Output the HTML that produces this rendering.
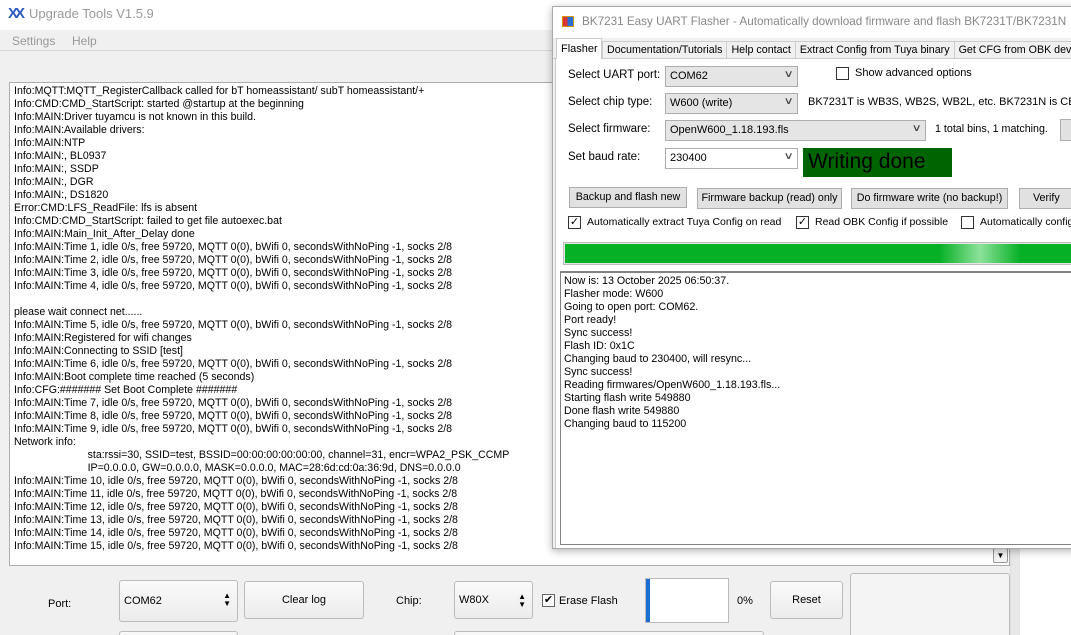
<!DOCTYPE html><html><head><style>
*{box-sizing:border-box;margin:0;padding:0}
html,body{width:1071px;height:635px;overflow:hidden}
body{position:relative;background:#fff;font-family:"Liberation Sans",sans-serif;font-size:11px;color:#000}
#w{position:absolute;left:0;top:0;width:1071px;height:635px;overflow:hidden}
.a{position:absolute}
.log div{height:13px;line-height:13px;white-space:pre}
.btn{position:absolute;background:#e1e1e1;border:1px solid #adadad;text-align:center;font-size:10.7px;white-space:nowrap}
.cb{position:absolute;width:13px;height:13px;border:1px solid #333;background:#fff;font-size:11px;line-height:11px;text-align:center}
.sel{position:absolute;background:#e5e5e5;border:1px solid #adadad;font-size:11px;padding:3px 4px}
.sel:after{content:"\2228";position:absolute;right:5px;top:2px;font-size:10px;color:#444;transform:scaleX(1.4)}
.lb{position:absolute;font-size:11.5px;white-space:nowrap}
.rb{position:absolute;border:1px solid #bbb;border-radius:3px;background:linear-gradient(#fafafa,#ececec);font-size:11px;text-align:center}
</style></head><body><div id="w">
<!-- left app -->
<div class="a" style="left:0;top:0;width:1020px;height:30px;background:#fff"></div>
<div class="a" style="left:8px;top:5px;color:#2a5bbf;font-size:15px;font-weight:bold;letter-spacing:-3px">XX</div>
<div class="a" style="left:29px;top:6px;font-size:13px;color:#999">Upgrade Tools V1.5.9</div>
<div class="a" style="left:0;top:30px;width:1020px;height:605px;background:#f0f0f0"></div>
<div class="a" style="left:0;top:50px;width:1020px;height:1px;background:#d8d8d8"></div>
<div class="a" style="left:12px;top:34px;font-size:12px;color:#999">Settings</div>
<div class="a" style="left:72px;top:34px;font-size:12px;color:#999">Help</div>
<div class="a" style="left:1010px;top:30px;width:10px;height:605px;background:#e8e8e8;border-left:1px solid #ddd"></div>
<div class="a log" style="left:9px;top:82px;width:1001px;height:484px;background:#fff;border:1px solid #adadad;padding:2px 0 0 4px;font-size:10.6px;overflow:hidden">
<div>Info:MQTT:MQTT_RegisterCallback called for bT homeassistant/ subT homeassistant/+</div>
<div>Info:CMD:CMD_StartScript: started @startup at the beginning</div>
<div>Info:MAIN:Driver tuyamcu is not known in this build.</div>
<div>Info:MAIN:Available drivers:</div>
<div>Info:MAIN:NTP</div>
<div>Info:MAIN:, BL0937</div>
<div>Info:MAIN:, SSDP</div>
<div>Info:MAIN:, DGR</div>
<div>Info:MAIN:, DS1820</div>
<div>Error:CMD:LFS_ReadFile: lfs is absent</div>
<div>Info:CMD:CMD_StartScript: failed to get file autoexec.bat</div>
<div>Info:MAIN:Main_Init_After_Delay done</div>
<div>Info:MAIN:Time 1, idle 0/s, free 59720, MQTT 0(0), bWifi 0, secondsWithNoPing -1, socks 2/8</div>
<div>Info:MAIN:Time 2, idle 0/s, free 59720, MQTT 0(0), bWifi 0, secondsWithNoPing -1, socks 2/8</div>
<div>Info:MAIN:Time 3, idle 0/s, free 59720, MQTT 0(0), bWifi 0, secondsWithNoPing -1, socks 2/8</div>
<div>Info:MAIN:Time 4, idle 0/s, free 59720, MQTT 0(0), bWifi 0, secondsWithNoPing -1, socks 2/8</div>
<div> </div>
<div>please wait connect net......</div>
<div>Info:MAIN:Time 5, idle 0/s, free 59720, MQTT 0(0), bWifi 0, secondsWithNoPing -1, socks 2/8</div>
<div>Info:MAIN:Registered for wifi changes</div>
<div>Info:MAIN:Connecting to SSID [test]</div>
<div>Info:MAIN:Time 6, idle 0/s, free 59720, MQTT 0(0), bWifi 0, secondsWithNoPing -1, socks 2/8</div>
<div>Info:MAIN:Boot complete time reached (5 seconds)</div>
<div>Info:CFG:####### Set Boot Complete #######</div>
<div>Info:MAIN:Time 7, idle 0/s, free 59720, MQTT 0(0), bWifi 0, secondsWithNoPing -1, socks 2/8</div>
<div>Info:MAIN:Time 8, idle 0/s, free 59720, MQTT 0(0), bWifi 0, secondsWithNoPing -1, socks 2/8</div>
<div>Info:MAIN:Time 9, idle 0/s, free 59720, MQTT 0(0), bWifi 0, secondsWithNoPing -1, socks 2/8</div>
<div>Network info:</div>
<div>                         sta:rssi=30, SSID=test, BSSID=00:00:00:00:00:00, channel=31, encr=WPA2_PSK_CCMP</div>
<div>                         IP=0.0.0.0, GW=0.0.0.0, MASK=0.0.0.0, MAC=28:6d:cd:0a:36:9d, DNS=0.0.0.0</div>
<div>Info:MAIN:Time 10, idle 0/s, free 59720, MQTT 0(0), bWifi 0, secondsWithNoPing -1, socks 2/8</div>
<div>Info:MAIN:Time 11, idle 0/s, free 59720, MQTT 0(0), bWifi 0, secondsWithNoPing -1, socks 2/8</div>
<div>Info:MAIN:Time 12, idle 0/s, free 59720, MQTT 0(0), bWifi 0, secondsWithNoPing -1, socks 2/8</div>
<div>Info:MAIN:Time 13, idle 0/s, free 59720, MQTT 0(0), bWifi 0, secondsWithNoPing -1, socks 2/8</div>
<div>Info:MAIN:Time 14, idle 0/s, free 59720, MQTT 0(0), bWifi 0, secondsWithNoPing -1, socks 2/8</div>
<div>Info:MAIN:Time 15, idle 0/s, free 59720, MQTT 0(0), bWifi 0, secondsWithNoPing -1, socks 2/8</div>
</div>
<div class="a" style="left:993px;top:548px;width:15px;height:15px;border:1px solid #999;border-radius:2px;background:#f4f4f4;font-size:8px;text-align:center;line-height:13px">&#9660;</div>
<div class="a" style="left:1021px;top:548px;width:50px;height:64px;background:#fff"></div>
<!-- bottom controls -->
<div class="lb" style="left:48px;top:598px;font-size:11px">Port:</div>
<div class="rb" style="left:119px;top:580px;width:119px;height:42px;text-align:left;padding:14px 4px">COM62<span style="position:absolute;right:6px;top:11px;font-size:8px;line-height:8px">&#9650;<br>&#9660;</span></div>
<div class="rb" style="left:244px;top:581px;width:120px;height:38px;line-height:36px">Clear log</div>
<div class="lb" style="left:396px;top:595px;font-size:11px">Chip:</div>
<div class="rb" style="left:454px;top:581px;width:79px;height:38px;text-align:left;padding:12px 4px">W80X<span style="position:absolute;right:6px;top:11px;font-size:8px;line-height:8px">&#9650;<br>&#9660;</span></div>
<div class="cb" style="left:542px;top:594px;border-color:#666">&#10004;</div>
<div class="lb" style="left:559px;top:595px;font-size:11px">Erase Flash</div>
<div class="a" style="left:645px;top:578px;width:84px;height:45px;background:#fff;border:1px solid #bbb"><div style="width:4px;height:100%;background:#1a6fd1"></div></div>
<div class="lb" style="left:737px;top:595px;font-size:11px">0%</div>
<div class="rb" style="left:770px;top:581px;width:73px;height:38px;line-height:36px">Reset</div>
<div class="rb" style="left:850px;top:573px;width:160px;height:70px;background:#f4f4f4"></div>
<div class="rb" style="left:119px;top:631px;width:119px;height:10px"></div>
<div class="rb" style="left:454px;top:631px;width:310px;height:10px"></div>
<!-- flasher window -->
<div class="a" style="left:552px;top:6px;width:530px;height:543px;background:#f0f0f0;border:1px solid #aaa;box-shadow:0 2px 8px rgba(0,0,0,.3)"></div>
<div class="a" style="left:553px;top:7px;width:518px;height:31px;background:#fff"></div>
<div class="a" style="left:562px;top:16px;width:12px;height:11px;background:linear-gradient(90deg,#d33 0 45%,#2a6fd6 45%);border:1px solid #c90"></div>
<div class="a" style="left:582px;top:15px;font-size:11.7px;color:#888;white-space:nowrap">BK7231 Easy UART Flasher - Automatically download firmware and flash BK7231T/BK7231N &nbsp;-</div>
<!-- tabs -->
<div class="a" style="left:553px;top:58px;width:518px;height:1px;background:#ccc"></div>
<div class="a" style="left:556px;top:38px;width:46px;height:21px;background:#fff;border:1px solid #ccc;border-bottom:none;padding:4px 4px;font-size:11px">Flasher</div>
<div class="a" style="left:602px;top:41px;width:469px;height:18px;display:flex;font-size:10.7px;white-space:nowrap;overflow:hidden">
<div style="border:1px solid #ccc;padding:2px 4px;background:#f0f0f0">Documentation/Tutorials</div>
<div style="border:1px solid #ccc;border-left:none;padding:2px 4px">Help contact</div>
<div style="border:1px solid #ccc;border-left:none;padding:2px 4px">Extract Config from Tuya binary</div>
<div style="border:1px solid #ccc;border-left:none;padding:2px 4px">Get CFG from OBK device</div>
</div>
<div class="a" style="left:555px;top:59px;width:516px;height:489px;background:#fff;border-left:1px solid #ccc"></div>
<div class="lb" style="left:568px;top:69px">Select UART port:</div>
<div class="sel" style="left:665px;top:66px;width:133px;height:21px">COM62</div>
<div class="cb" style="left:836px;top:67px;border-color:#333"></div>
<div class="lb" style="left:855px;top:67px;font-size:11px">Show advanced options</div>
<div class="lb" style="left:568px;top:96px">Select chip type:</div>
<div class="sel" style="left:665px;top:93px;width:133px;height:21px">W600 (write)</div>
<div class="lb" style="left:808px;top:96px;font-size:11px">BK7231T is WB3S, WB2S, WB2L, etc. BK7231N is CB2S</div>
<div class="lb" style="left:568px;top:123px">Select firmware:</div>
<div class="sel" style="left:665px;top:120px;width:261px;height:21px">OpenW600_1.18.193.fls</div>
<div class="lb" style="left:935px;top:123px;font-size:10.7px">1 total bins, 1 matching.</div>
<div class="btn" style="left:1060px;top:119px;width:11px;height:22px;border-right:none"></div>
<div class="lb" style="left:568px;top:151px">Set baud rate:</div>
<div class="sel" style="left:665px;top:148px;width:133px;height:21px;background:#fff">230400</div>
<div class="a" style="left:803px;top:148px;width:149px;height:29px;background:#006400;color:#000;font-size:21px;padding:2px 5px;white-space:nowrap">Writing done</div>
<div class="btn" style="left:569px;top:187px;width:118px;height:21px;line-height:19px">Backup and flash new</div>
<div class="btn" style="left:697px;top:188px;width:145px;height:21px;line-height:19px">Firmware backup (read) only</div>
<div class="btn" style="left:851px;top:188px;width:157px;height:21px;line-height:19px">Do firmware write (no backup!)</div>
<div class="btn" style="left:1019px;top:188px;width:52px;height:21px;line-height:19px;border-right:none;text-align:left;padding-left:13px">Verify</div>
<div class="cb" style="left:568px;top:216px">&#10003;</div>
<div class="lb" style="left:587px;top:216px;font-size:10.5px">Automatically extract Tuya Config on read</div>
<div class="cb" style="left:796px;top:216px">&#10003;</div>
<div class="lb" style="left:815px;top:216px;font-size:10.5px">Read OBK Config if possible</div>
<div class="cb" style="left:961px;top:216px"></div>
<div class="lb" style="left:980px;top:216px;font-size:10.5px">Automatically configure</div>
<div class="a" style="left:563px;top:242px;width:508px;height:23px;border:1px solid #bcbcbc;border-right:none;background:#e6e6e6;padding:1px 0 1px 1px"><div style="height:100%;background:linear-gradient(90deg,#06b025 0,#06b025 74%,#8de29a 82%,#06b025 90%)"></div></div>
<div class="a log" style="left:560px;top:271px;width:511px;height:274px;background:#fff;border:1px solid #828282;border-right:none;border-top:2px solid #828282;padding:2px 0 0 3px;font-size:10.7px">
<div>Now is: 13 October 2025 06:50:37.</div>
<div>Flasher mode: W600</div>
<div>Going to open port: COM62.</div>
<div>Port ready!</div>
<div>Sync success!</div>
<div>Flash ID: 0x1C</div>
<div>Changing baud to 230400, will resync...</div>
<div>Sync success!</div>
<div>Reading firmwares/OpenW600_1.18.193.fls...</div>
<div>Starting flash write 549880</div>
<div>Done flash write 549880</div>
<div>Changing baud to 115200</div>
</div>
</div></body></html>
